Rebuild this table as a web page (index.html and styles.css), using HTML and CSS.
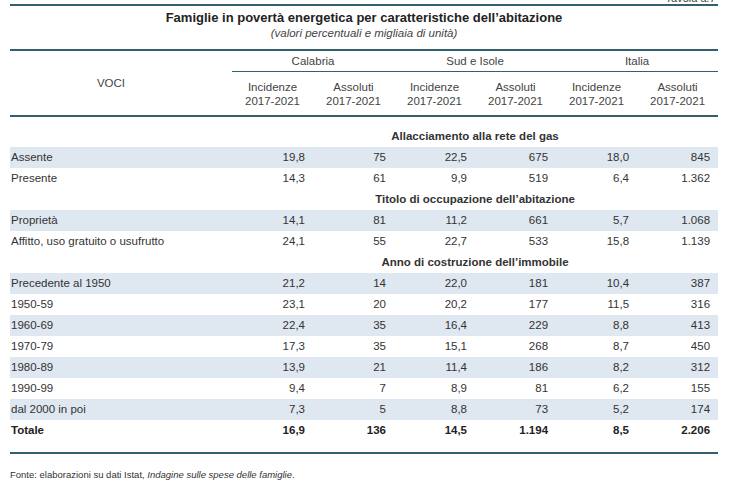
FILE: index.html
```html
<!DOCTYPE html>
<html lang="it">
<head>
<meta charset="utf-8">
<title>Famiglie in povertà energetica</title>
<link rel="stylesheet" href="styles.css">
</head>
<body>
<div class="page">
  <div class="tag"><span>Tavola a.7</span></div>
  <div class="caption">
    <div class="title">Famiglie in povertà energetica per caratteristiche dell’abitazione</div>
    <div class="subtitle">(valori percentuali e migliaia di unità)</div>
  </div>
  <div class="tablewrap">
    <table class="data">
      <colgroup>
        <col class="c-label">
        <col class="c-num"><col class="c-num"><col class="c-num">
        <col class="c-num"><col class="c-num"><col class="c-num">
      </colgroup>
      <thead>
        <tr class="h1">
          <th class="voci" rowspan="2">VOCI</th>
          <th class="group" colspan="2">Calabria</th>
          <th class="group" colspan="2">Sud e Isole</th>
          <th class="group" colspan="2">Italia</th>
        </tr>
        <tr class="h2">
          <th>Incidenze<br>2017-2021</th>
          <th>Assoluti<br>2017-2021</th>
          <th>Incidenze<br>2017-2021</th>
          <th>Assoluti<br>2017-2021</th>
          <th>Incidenze<br>2017-2021</th>
          <th>Assoluti<br>2017-2021</th>
        </tr>
      </thead>
      <tbody>
        <tr class="section first"><td></td><td colspan="6">Allacciamento alla rete del gas</td></tr>
        <tr class="shade"><td>Assente</td><td>19,8</td><td>75</td><td>22,5</td><td>675</td><td>18,0</td><td>845</td></tr>
        <tr><td>Presente</td><td>14,3</td><td>61</td><td>9,9</td><td>519</td><td>6,4</td><td>1.362</td></tr>
        <tr class="section"><td></td><td colspan="6">Titolo di occupazione dell’abitazione</td></tr>
        <tr class="shade"><td>Proprietà</td><td>14,1</td><td>81</td><td>11,2</td><td>661</td><td>5,7</td><td>1.068</td></tr>
        <tr><td>Affitto, uso gratuito o usufrutto</td><td>24,1</td><td>55</td><td>22,7</td><td>533</td><td>15,8</td><td>1.139</td></tr>
        <tr class="section"><td></td><td colspan="6">Anno di costruzione dell’immobile</td></tr>
        <tr class="shade"><td>Precedente al 1950</td><td>21,2</td><td>14</td><td>22,0</td><td>181</td><td>10,4</td><td>387</td></tr>
        <tr><td>1950-59</td><td>23,1</td><td>20</td><td>20,2</td><td>177</td><td>11,5</td><td>316</td></tr>
        <tr class="shade"><td>1960-69</td><td>22,4</td><td>35</td><td>16,4</td><td>229</td><td>8,8</td><td>413</td></tr>
        <tr><td>1970-79</td><td>17,3</td><td>35</td><td>15,1</td><td>268</td><td>8,7</td><td>450</td></tr>
        <tr class="shade"><td>1980-89</td><td>13,9</td><td>21</td><td>11,4</td><td>186</td><td>8,2</td><td>312</td></tr>
        <tr><td>1990-99</td><td>9,4</td><td>7</td><td>8,9</td><td>81</td><td>6,2</td><td>155</td></tr>
        <tr class="shade"><td>dal 2000 in poi</td><td>7,3</td><td>5</td><td>8,8</td><td>73</td><td>5,2</td><td>174</td></tr>
        <tr class="total"><td>Totale</td><td>16,9</td><td>136</td><td>14,5</td><td>1.194</td><td>8,5</td><td>2.206</td></tr>
      </tbody>
    </table>
  </div>
  <p class="source">Fonte: elaborazioni su dati Istat, <em>Indagine sulle spese delle famiglie</em>.</p>
</div>
</body>
</html>
```

FILE: styles.css
```css
html, body {
  margin: 0;
  padding: 0;
  background: #ffffff;
}

body {
  font-family: "Liberation Sans", Arial, Helvetica, sans-serif;
  color: #333333;
}

.page {
  width: 708px;
  margin-left: 10px;
}

.tag {
  height: 4px;
  overflow: hidden;
  display: flex;
  justify-content: flex-end;
  align-items: flex-end;
}

.tag span {
  font-size: 11px;
  line-height: 11px;
  font-style: italic;
  color: #444;
  padding-right: 2px;
}

.caption {
  border-top: 2px solid #33606e;
  border-bottom: 2px solid #33606e;
  text-align: center;
  padding-top: 4px;
  padding-bottom: 9px;
}

.title {
  font-size: 13px;
  line-height: 16px;
  font-weight: bold;
  color: #222222;
}

.subtitle {
  font-size: 11.5px;
  line-height: 14px;
  font-style: italic;
  color: #444444;
}

.tablewrap {
  border-bottom: 2px solid #33606e;
  padding-bottom: 11px;
}

.data {
  width: 708px;
  table-layout: fixed;
  border-collapse: separate;
  border-spacing: 0;
  font-size: 11.5px;
}

.c-label { width: 222px; }
.c-num { width: 81px; }

.data th {
  font-weight: normal;
  color: #444444;
  padding: 0;
}

.h1 .group {
  line-height: 20px;
  border-bottom: 1px solid #33606e;
  text-align: center;
}

.voci {
  text-align: center;
  vertical-align: middle;
  border-bottom: 2px solid #33606e;
  padding-right: 20px !important;
}

.h2 th {
  line-height: 14px;
  padding: 8px 0 7px;
  text-align: center;
  border-bottom: 2px solid #33606e;
}

.data td {
  line-height: 21px;
  padding: 0 8px 0 0;
  text-align: right;
  white-space: nowrap;
}

.data td:first-child {
  text-align: left;
  padding: 0 0 0 1px;
}

.section td {
  text-align: center !important;
  font-weight: bold;
  padding: 0;
}

.section.first td {
  padding-top: 9px;
}

.shade td {
  background: #dfe7f0;
}

.total td {
  font-weight: bold;
  color: #222222;
}

.source {
  margin: 15px 0 0;
  font-size: 9.5px;
  line-height: 12px;
  color: #333333;
}
```
